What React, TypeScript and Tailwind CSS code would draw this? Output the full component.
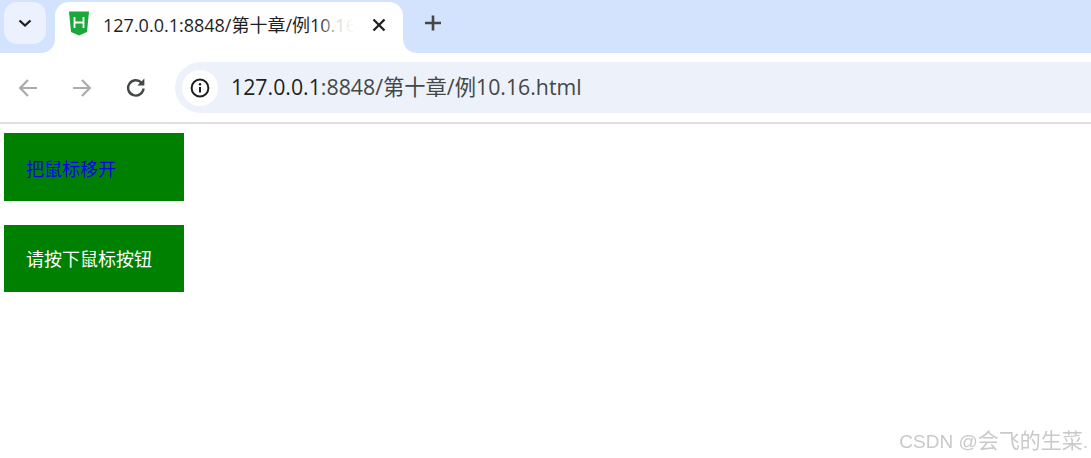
export default function App() {
  const font = { fontFamily: '"Open Sans", "Noto Sans CJK SC", sans-serif' };
  return (
    <div className="w-[1091px] h-[458px] bg-white flex flex-col overflow-hidden relative font-['Open_Sans','Noto_Sans_CJK_SC',sans-serif]" style={font}>
      {/* tab strip */}
      <div className="h-[53px] shrink-0 bg-[#d3e3fd] flex items-start pt-[2px] pl-[4px]">
        <div className="w-[42px] h-[42px] rounded-[13px] bg-[#ebf1ff] flex items-center justify-center">
          <svg width="16" height="16" viewBox="0 0 16 16" fill="none" stroke="#1f1f1f" strokeWidth="2.3">
            <path d="M2.5 5.5 8 10.5 13.5 5.5" />
          </svg>
        </div>
        <div className="relative ml-[9px] w-[348px] h-[51px] bg-white rounded-t-[14px] flex items-start pt-[9px] pl-[13px]">
          <svg className="absolute -left-[14px] bottom-0" width="14" height="14" viewBox="0 0 14 14">
            <path d="M14 0V14H0A14 14 0 0 0 14 0Z" fill="#fff" />
          </svg>
          <svg className="absolute -right-[14px] bottom-0" width="14" height="14" viewBox="0 0 14 14">
            <path d="M0 0V14H14A14 14 0 0 1 0 0Z" fill="#fff" />
          </svg>
          <svg width="22" height="25" viewBox="0 0 22 25" className="shrink-0">
            <path d="M1 0.5H21L19 21L11 24.5L3 21Z" fill="#1ba83a" />
            <path d="M6.5 6V17M15.5 6V17M6.5 11.5H15.5" stroke="#fff" strokeWidth="1.8" fill="none" />
          </svg>
          <div className="relative ml-[13px] w-[252px] h-[28px] overflow-hidden whitespace-nowrap text-[18px] leading-[28px] text-[#1f1f1f]">
            127.0.0.1:8848/第十章/例10.16
            <div className="absolute right-0 top-0 h-full w-[36px] bg-gradient-to-r from-transparent via-white/80 to-white" />
          </div>
          <svg width="14" height="14" viewBox="0 0 14 14" className="ml-[17px] mt-[7px] shrink-0" stroke="#1f1f1f" strokeWidth="2.3" fill="none">
            <path d="M1.5 1.5 12.5 12.5M12.5 1.5 1.5 12.5" />
          </svg>
        </div>
        <svg width="18" height="18" viewBox="0 0 18 18" className="ml-[21px] mt-[12px] shrink-0" stroke="#444746" strokeWidth="2.6" fill="none">
          <path d="M9 1.5V16.5M1 9H17" />
        </svg>
      </div>

      {/* toolbar */}
      <div className="h-[69px] shrink-0 bg-white flex items-start pt-[9px] pl-[18px]">
        <svg width="20" height="20" viewBox="0 0 20 20" className="mt-[16px] shrink-0" stroke="#a9abad" strokeWidth="2.2" fill="none">
          <path d="M19 10H2.5M10 2 2.2 10 10 18" />
        </svg>
        <svg width="20" height="20" viewBox="0 0 20 20" className="ml-[34px] mt-[16px] shrink-0" stroke="#a9abad" strokeWidth="2.2" fill="none">
          <path d="M1 10H17.5M10 2 17.8 10 10 18" />
        </svg>
        <svg width="20" height="20" viewBox="0 0 20 20" className="ml-[34px] mt-[16px] shrink-0" stroke="#444746" strokeWidth="2.4" fill="none">
          <path d="M17.5 10.5A7.7 7.7 0 1 1 15.4 4.6" />
          <path d="M18.4 0.4V7.4H11.4Z" fill="#444746" stroke="none" />
        </svg>
        <div className="ml-[29px] flex-1 h-[51px] bg-[#edf2fa] rounded-l-[25.5px] flex items-center pl-[7px]">
          <div className="w-[36px] h-[36px] rounded-full bg-white flex items-center justify-center shrink-0">
            <svg width="20" height="20" viewBox="0 0 20 20" fill="none">
              <circle cx="10" cy="10" r="8.4" stroke="#1f1f1f" strokeWidth="2" />
              <path d="M10 9V14.5" stroke="#1f1f1f" strokeWidth="2" />
              <circle cx="10" cy="6.2" r="1.2" fill="#1f1f1f" />
            </svg>
          </div>
          <div className="ml-[13px] -mt-[1px] text-[21.3px] leading-[28px] text-[#444746] whitespace-nowrap">
            <span className="text-[#1f1f1f]">127.0.0.1</span>:8848/第十章/例10.16.html
          </div>
        </div>
      </div>

      <div className="h-[2px] shrink-0 bg-[#e0e0e0]" />

      {/* page */}
      <div className="flex flex-col items-start pt-[9px] pl-[4px] gap-[24px] font-['Noto_Sans_CJK_SC',sans-serif]">
        <div className="w-[180px] h-[68px] bg-[#008000] text-[#0000ff] text-[18px] leading-[24px] pl-[22px] pt-[23px]">把鼠标移开</div>
        <div className="w-[180px] h-[67px] bg-[#008000] text-white text-[18px] leading-[24px] pl-[22px] pt-[21px]">请按下鼠标按钮</div>
      </div>

      <div className="absolute right-[3px] top-[428px] text-[19px] leading-[26px] text-[#c9c9c9] blur-[0.6px] whitespace-nowrap font-['Liberation_Sans','Noto_Sans_CJK_SC',sans-serif]">
        CSDN @<span className="text-[21px]">会飞的生菜</span>.
      </div>
    </div>
  );
}
